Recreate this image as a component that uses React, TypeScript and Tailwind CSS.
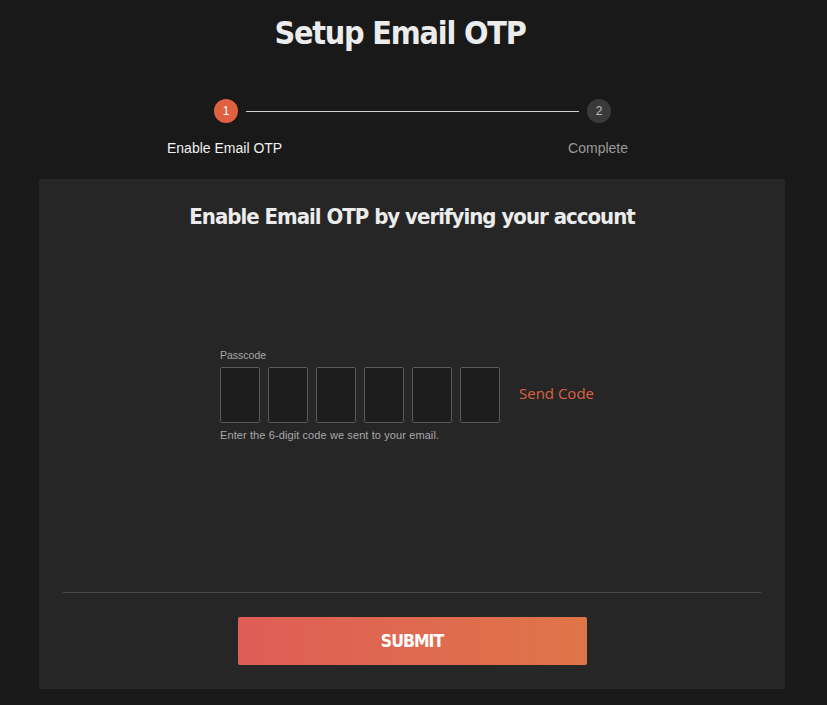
import React from "react";

const cond = { fontFamily: '"DejaVu Sans Condensed", "DejaVu Sans", sans-serif', fontStretch: "condensed" as const };

export default function App() {
  return (
    <div className="min-h-[705px] w-full bg-[#191919] flex flex-col items-center pr-[3px]" style={{ fontFamily: '"Liberation Sans", Arial, sans-serif' }}>
      <h1 className="mt-[12px] mr-[24px] h-[42px] text-[32px] leading-[42px] font-bold text-[#ececec] tracking-[-1.2px]" style={cond}>
        Setup Email OTP
      </h1>
      <div className="mt-[45px] w-[490px] flex flex-col">
        <div className="flex items-center pl-[47px] pr-[46px]">
          <div className="w-[24px] h-[24px] rounded-full bg-[#e0603f] text-white text-[12px] flex items-center justify-center">1</div>
          <div className="flex-1 h-px bg-[#cfcfcf] mx-[8px]" />
          <div className="w-[24px] h-[24px] rounded-full bg-[#3a3a3a] text-[#bdbdbd] text-[12px] flex items-center justify-center">2</div>
        </div>
        <div className="flex justify-between mt-[17px] text-[14px] leading-[16px] pr-[29px]">
          <span className="text-[#f0f0f0]">Enable Email OTP</span>
          <span className="text-[#9a9a9a]">Complete</span>
        </div>
      </div>
      <div className="mt-[23px] w-[746px] h-[510px] bg-[#262626] flex flex-col items-center">
        <h2 className="mt-[24px] text-[22px] leading-[28px] font-bold text-[#ececec] tracking-[-1px]" style={cond}>
          Enable Email OTP by verifying your account
        </h2>
        <div className="mt-[118px] ml-[2px] w-[386px] flex flex-col">
          <label className="text-[10.5px] leading-[12px] text-[#a8a8a8]">Passcode</label>
          <div className="mt-[6px] flex items-center">
            {[0, 1, 2, 3, 4, 5].map((i) => (
              <div key={i} className="w-[40px] h-[56px] mr-[8px] border border-[#5a5a5a] rounded-[2px] bg-[#1d1d1d]" />
            ))}
            <button className="ml-[11px] mb-[3px] text-[15px] text-[#dc6240]" style={{ fontFamily: '"Open Sans", sans-serif' }}>Send Code</button>
          </div>
          <p className="mt-[6px] text-[11px] leading-[12px] text-[#a8a8a8] tracking-[0.1px]">Enter the 6-digit code we sent to your email.</p>
        </div>
        <div className="mt-[151px] w-[698px] h-px bg-[#4a4a4a]" />
        <button
          className="mt-[24px] w-[349px] h-[48px] rounded-[2px] bg-gradient-to-r from-[#df5d56] to-[#df7548] text-white text-[17.5px] font-bold tracking-[-1px]"
          style={cond}
        >
          SUBMIT
        </button>
      </div>
    </div>
  );
}
